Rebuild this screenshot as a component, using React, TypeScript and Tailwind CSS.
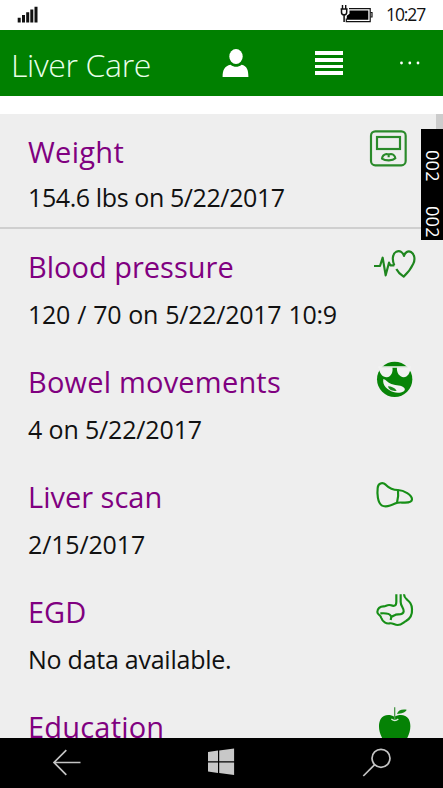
import type { ReactNode } from "react";

function ScaleIcon() {
    return (
        <svg viewBox="72 54 126 126" className="mr-1.5 h-[42px] w-[42px] shrink-0" fill="none" stroke="#2a8a2a" strokeWidth="6.5">
            <rect x="84" y="64" width="104" height="102" rx="13" />
            <rect x="102" y="81" width="69" height="36" />
            <path d="M117 146c1-8 7-13 13-14 3 0 5 1 7 1s4-1 7-1c7 1 12 6 13 13-8 8-30 8-40 1zM137 133v9" strokeLinejoin="round" />
        </svg>
    );
}

function HeartIcon() {
    return (
        <svg viewBox="90 399 126 126" className="h-[42px] w-[42px] shrink-0 overflow-visible" fill="none" stroke="#1f861f" strokeWidth="6.5" strokeLinejoin="round">
            <path d="M93 468h18l8-25 9 53 10-38 4 8h12" />
            <path d="M154 466c-8-18-5-35 6-41 11-5 20 2 23 13 3-11 12-17 21-12 11 7 13 22 7 35-6 13-18 29-29 39-9-6-17-13-22-23" />
        </svg>
    );
}

function CoolFaceIcon() {
    return (
        <svg viewBox="90 54 126 126" className="h-[42px] w-[42px] shrink-0">
            <circle cx="155" cy="118" r="53" fill="#088408" />
            <g fill="#f2f2f2">
                <path d="M106 79h98v4h-98z" />
                <path d="M107 82h41c3 13-3 29-17 30-13 0-22-12-24-30z" />
                <path d="M162 82h41c-2 18-9 29-21 30-13-1-22-14-20-30z" />
                <path d="M121 117c8 2 13 11 24 15 16 6 30 2 39 12 8 12-18 18-33 12-17-6-34-19-30-39z" />
            </g>
            <path d="M135 139c10 0 21 5 26 13-11 3-24-2-26-13z" fill="#1c8a1c" />
        </svg>
    );
}

function LiverIcon() {
    return (
        <svg viewBox="90 39 126 126" className="h-[42px] w-[42px] shrink-0" fill="none" stroke="#178f17" strokeWidth="6.5" strokeLinejoin="round">
            <path d="M104 84c1-14 14-19 24-10 12 12 23 16 37 16 18 1 42 15 42 28 0 9-11 10-21 10-12 0-20-2-28 2-14 7-32 12-42 6-12-8-14-34-12-52z" />
            <path d="M165 91c2 13 0 25-3 37" />
        </svg>
    );
}

function StomachIcon() {
    return (
        <svg viewBox="90 384 126 126" className="h-[42px] w-[42px] shrink-0" fill="none" stroke="#178f17" strokeWidth="6.5" strokeLinejoin="round">
            <path d="M160 403v22c0 14-8 14-16 11-10-4-15 3-21 3-12-1-20 8-20 17 0 8 9 8 12 18 4 12 15 18 25 16 9-2 14 5 24 5 12 0 17-8 25-12 14-8 19-22 18-36-1-16-7-21-15-28-6-5-9-8-9-16" />
            <path d="M173 403v23c0 12 10 18 9 28-1 12-16 8-24 10-8 3-12 9-15 3-4-8-18-8-31-7M146 466l-3 14" />
        </svg>
    );
}

function AppleIcon() {
    return (
        <svg viewBox="456 39 126 126" className="h-[42px] w-[42px] shrink-0">
            <path d="M520 80c14-8 34-8 43 7 9 16 5 40-4 56-8 14-16 20-26 16-8-3-16-3-24 0-10 4-19-3-26-16-9-16-13-40-4-56 8-14 28-15 41-7z" fill="#058205" />
            <path d="M511 87c6 5 15 5 21 0" fill="none" stroke="#d5ead5" strokeWidth="4" />
            <path d="M521 52v36" stroke="#4e9a4e" strokeWidth="4" />
            <path d="M528 72c3-12 14-15 29-13-3 9-16 11-29 13z" fill="#158915" />
        </svg>
    );
}

type RowProps = {
    title: string;
    value?: string;
    icon: ReactNode;
    titleClass?: string;
    valueClass?: string;
    className?: string;
};

function Row({ title, value, icon, titleClass = "", valueClass = "", className = "" }: RowProps) {
    return (
        <div className={`flex h-[115px] shrink-0 justify-between pl-7 pr-7 ${className}`}>
            <div className="whitespace-nowrap">
                <h2 className={`mt-[18px] text-[29px] leading-10 text-[#800080] ${titleClass}`}>{title}</h2>
                <p className={`text-[25px] leading-9 text-[#111111] ${valueClass}`}>{value}</p>
            </div>
            <div className="mt-3.5 flex w-0 shrink-0 justify-end">{icon}</div>
        </div>
    );
}

function StatusBar() {
    return (
        <div className="flex h-[30px] shrink-0 items-start justify-between bg-white pl-[17px] pr-[18px]">
            <svg viewBox="0 0 21 30" className="h-[30px] w-[21px]" fill="#111111">
                <path d="M.7 17.8h3v4.6h-3zM5 15h3v7.4H5zM9.2 12.3h3v10.1h-3zM13.3 9.5h3v12.9h-3zM17.5 6.7h3v15.7h-3z" />
            </svg>
            <div className="flex">
                <svg viewBox="340 0 34 30" className="h-[30px] w-[34px]" fill="none" stroke="#111111" strokeWidth="1.2">
                    <path d="M349 8.6h21.2v13h-23.9v-3" />
                    <path d="M349.5 10.4h18.8v9.4h-21.5v-4l2.7-2z" fill="#000000" stroke="none" />
                    <path d="M370.5 12.5h1.5v4.5h-1.5" />
                    <path d="M342.5 5v4M345.7 5v4" strokeWidth="1.4" />
                    <path d="M340.6 9h7M341.5 9v3.2a2.6 2.6 0 0 0 5.2 0V9M344.1 15v7" strokeWidth="1.5" />
                </svg>
                <span className="ml-3 w-[39px] whitespace-nowrap text-[17.5px] leading-[29px] tracking-[-1.1px] text-[#111111]">10:27</span>
            </div>
        </div>
    );
}

function Header() {
    return (
        <header className="flex h-[66px] shrink-0 items-center bg-[#008000] text-white">
            <h1 className="w-[222px] whitespace-nowrap pl-[11px] pt-1 text-[32px] font-light leading-[62px] tracking-[-0.35px] text-[#e9ffe9]">Liver Care</h1>
            <svg viewBox="0 0 27 30" className="h-[30px] w-[27px]" fill="#ffffff">
                <ellipse cx="14" cy="8.5" rx="6.7" ry="7.5" />
                <path d="M.6 29c0-7 2-11 8-12.2 3.500 2.700 7.500 2.700 11 0 5.400 1.200 6.800 5.200 6.800 12.200z" />
            </svg>
            <div className="ml-[66px] flex w-7 flex-col gap-[3px]">
                <span className="h-[3.7px] bg-white" />
                <span className="h-[3.7px] bg-white" />
                <span className="h-[3.7px] bg-white" />
                <span className="h-[3.7px] bg-white" />
            </div>
            <svg viewBox="0 0 22 4" className="ml-[56px] h-1 w-[22px]" fill="#ffffff">
                <circle cx="2.5" cy="2" r="1.4" />
                <circle cx="10.8" cy="2" r="1.4" />
                <circle cx="19" cy="2" r="1.4" />
            </svg>
        </header>
    );
}

function NavBar() {
    return (
        <nav className="flex h-[50px] shrink-0 items-center justify-between bg-black pl-[52px] pr-[52px]">
            <svg viewBox="52 738 30 50" className="h-[50px] w-[30px]" fill="none" stroke="#c4c4c4" strokeWidth="1.7">
                <path d="M80.5 762.5H54M66.3 750.2L54 762.5l12.3 12.3" />
            </svg>
            <svg viewBox="208 738 28 50" className="h-[50px] w-7" fill="#c8c8c8">
                <path d="M207.500 752l10.500-1.400v10.600h-10.500zM219.200 750.400l14.900-1.900v12.700h-14.900zM207.500 762.500H218v10.400l-10.500-1.400zM219.200 762.500h14.900v12.400l-14.900-1.900z" />
            </svg>
            <svg viewBox="362 738 29 50" className="h-[50px] w-[29px]" fill="none" stroke="#c4c4c4" strokeWidth="1.7">
                <circle cx="381" cy="758.3" r="9" />
                <path d="M374.7 764.7L363.3 776" />
            </svg>
        </nav>
    );
}

export default function App() {
    return (
        <div className="relative flex h-[788px] w-[443px] flex-col overflow-hidden bg-white font-['Open_Sans','Noto_Sans',sans-serif]">
            <StatusBar />
            <Header />
            <main className="mt-[18px] flex h-[624px] shrink-0 flex-col overflow-hidden bg-[#eeeeee]">
                <Row title="Weight" value="154.6 lbs on 5/22/2017" icon={<ScaleIcon />} titleClass="tracking-[0.3px]" valueClass="mt-[7px] tracking-[-0.4px]" className="border-b-2 border-[#cfcfcf]" />
                <Row title="Blood pressure" value="120 / 70 on 5/22/2017 10:9" icon={<HeartIcon />} valueClass="mt-[9px] tracking-[-0.25px] [word-spacing:0.8px]" />
                <Row title="Bowel movements" value="4 on 5/22/2017" icon={<CoolFaceIcon />} titleClass="tracking-[0.2px]" valueClass="mt-[9px] tracking-[-0.15px]" />
                <Row title="Liver scan" value="2/15/2017" icon={<LiverIcon />} valueClass="mt-[9px] tracking-[-0.15px]" />
                <Row title="EGD" value="No data available." icon={<StomachIcon />} valueClass="mt-[9px] tracking-[-0.25px]" />
                <Row title="Education" icon={<AppleIcon />} titleClass="tracking-[0.2px]" />
            </main>
            <NavBar />

            {/* scroll thumb and frame counter sit over the list */}
            <div className="absolute right-0 top-[114px] h-[15px] w-[7px] bg-[#cccccc]" />
            <div className="absolute right-0 top-[129px] flex h-[111px] w-[22px] gap-6 bg-black pt-[21px] text-[18px] font-medium leading-[20px] tracking-[0.3px] text-white [writing-mode:vertical-rl]">
                <span>002</span>
                <span>002</span>
            </div>
        </div>
    );
}
